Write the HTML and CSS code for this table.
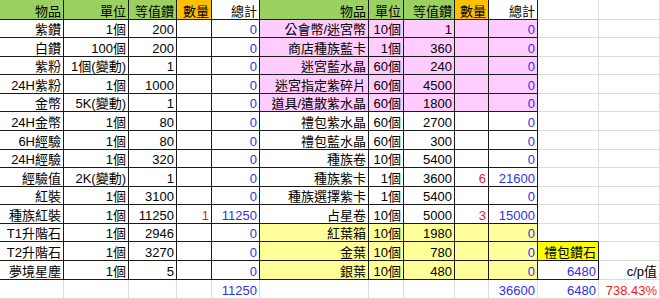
FILE: index.html
```html
<!DOCTYPE html>
<html lang="zh-Hant">
<head>
<meta charset="utf-8">
<title>等值鑽計算</title>
<link rel="stylesheet" href="styles.css">
</head>
<body>
<div class="sheet">
  <!-- row 0 -->
  <div class="c t g">物品</div><div class="c t g">單位</div><div class="c t g">等值鑽</div><div class="c t o">數量</div><div class="c t">總計</div>
  <div class="c t g">物品</div><div class="c t g">單位</div><div class="c t g">等值鑽</div><div class="c t o">數量</div><div class="c t">總計</div>
  <div class="c"></div><div class="c"></div>
  <!-- row 1 -->
  <div class="c t">紫鑽</div><div class="c t">1個</div><div class="c t">200</div><div class="c t"></div><div class="c t blue">0</div>
  <div class="c t p">公會幣/迷宮幣</div><div class="c t p">10個</div><div class="c t p">1</div><div class="c t p"></div><div class="c t p blue">0</div>
  <div class="c"></div><div class="c"></div>
  <!-- row 2 -->
  <div class="c t">白鑽</div><div class="c t">100個</div><div class="c t">200</div><div class="c t"></div><div class="c t blue">0</div>
  <div class="c t p">商店種族藍卡</div><div class="c t p">1個</div><div class="c t p">360</div><div class="c t p"></div><div class="c t p blue">0</div>
  <div class="c"></div><div class="c"></div>
  <!-- row 3 -->
  <div class="c t">紫粉</div><div class="c t">1個(變動)</div><div class="c t">1</div><div class="c t"></div><div class="c t blue">0</div>
  <div class="c t p">迷宮藍水晶</div><div class="c t p">60個</div><div class="c t p">240</div><div class="c t p"></div><div class="c t p blue">0</div>
  <div class="c"></div><div class="c"></div>
  <!-- row 4 -->
  <div class="c t">24H紫粉</div><div class="c t">1個</div><div class="c t">1000</div><div class="c t"></div><div class="c t blue">0</div>
  <div class="c t p">迷宮指定紫碎片</div><div class="c t p">60個</div><div class="c t p">4500</div><div class="c t p"></div><div class="c t p blue">0</div>
  <div class="c"></div><div class="c"></div>
  <!-- row 5 -->
  <div class="c t">金幣</div><div class="c t">5K(變動)</div><div class="c t">1</div><div class="c t"></div><div class="c t blue">0</div>
  <div class="c t p">道具/遣散紫水晶</div><div class="c t p">60個</div><div class="c t p">1800</div><div class="c t p"></div><div class="c t p blue">0</div>
  <div class="c"></div><div class="c"></div>
  <!-- row 6 -->
  <div class="c t">24H金幣</div><div class="c t">1個</div><div class="c t">80</div><div class="c t"></div><div class="c t blue">0</div>
  <div class="c t">禮包紫水晶</div><div class="c t">60個</div><div class="c t">2700</div><div class="c t"></div><div class="c t blue">0</div>
  <div class="c"></div><div class="c"></div>
  <!-- row 7 -->
  <div class="c t">6H經驗</div><div class="c t">1個</div><div class="c t">80</div><div class="c t"></div><div class="c t blue">0</div>
  <div class="c t">禮包藍水晶</div><div class="c t">60個</div><div class="c t">300</div><div class="c t"></div><div class="c t blue">0</div>
  <div class="c"></div><div class="c"></div>
  <!-- row 8 -->
  <div class="c t">24H經驗</div><div class="c t">1個</div><div class="c t">320</div><div class="c t"></div><div class="c t blue">0</div>
  <div class="c t">種族卷</div><div class="c t">10個</div><div class="c t">5400</div><div class="c t"></div><div class="c t blue">0</div>
  <div class="c"></div><div class="c"></div>
  <!-- row 9 -->
  <div class="c t">經驗值</div><div class="c t">2K(變動)</div><div class="c t">1</div><div class="c t"></div><div class="c t blue">0</div>
  <div class="c t">種族紫卡</div><div class="c t">1個</div><div class="c t">3600</div><div class="c t red">6</div><div class="c t blue">21600</div>
  <div class="c"></div><div class="c"></div>
  <!-- row 10 -->
  <div class="c t">紅裝</div><div class="c t">1個</div><div class="c t">3100</div><div class="c t"></div><div class="c t blue">0</div>
  <div class="c t">種族選擇紫卡</div><div class="c t">1個</div><div class="c t">5400</div><div class="c t"></div><div class="c t blue">0</div>
  <div class="c"></div><div class="c"></div>
  <!-- row 11 -->
  <div class="c t">種族紅裝</div><div class="c t">1個</div><div class="c t">11250</div><div class="c t red">1</div><div class="c t blue">11250</div>
  <div class="c t">占星卷</div><div class="c t">10個</div><div class="c t">5000</div><div class="c t red">3</div><div class="c t blue">15000</div>
  <div class="c"></div><div class="c"></div>
  <!-- row 12 -->
  <div class="c t">T1升階石</div><div class="c t">1個</div><div class="c t">2946</div><div class="c t"></div><div class="c t blue">0</div>
  <div class="c t y">紅葉箱</div><div class="c t y">10個</div><div class="c t y">1980</div><div class="c t y"></div><div class="c t y blue">0</div>
  <div class="c tb"></div><div class="c"></div>
  <!-- row 13 -->
  <div class="c t">T2升階石</div><div class="c t">1個</div><div class="c t">3270</div><div class="c t"></div><div class="c t blue">0</div>
  <div class="c t y">金葉</div><div class="c t y">10個</div><div class="c t y">780</div><div class="c t y"></div><div class="c t y blue">0</div>
  <div class="c t yy">禮包鑽石</div><div class="c"></div>
  <!-- row 14 -->
  <div class="c t">夢境星塵</div><div class="c t">1個</div><div class="c t">5</div><div class="c t"></div><div class="c t blue">0</div>
  <div class="c t y">銀葉</div><div class="c t y">10個</div><div class="c t y">480</div><div class="c t y"></div><div class="c t y blue">0</div>
  <div class="c t blue">6480</div><div class="c">c/p值</div>
  <!-- row 15 -->
  <div class="c"></div><div class="c"></div><div class="c"></div><div class="c"></div><div class="c blue">11250</div>
  <div class="c"></div><div class="c"></div><div class="c"></div><div class="c"></div><div class="c blue">36600</div>
  <div class="c blue">6480</div><div class="c red">738.43%</div>
</div>
</body>
</html>
```
FILE: styles.css
```css
html, body {
  margin: 0;
  padding: 0;
  background: #ffffff;
}

body {
  width: 660px;
  height: 299px;
  overflow: hidden;
  font-family: "Liberation Sans", "Noto Sans CJK TC", sans-serif;
  font-size: 13px;
  color: #000000;
}

.sheet {
  display: grid;
  grid-template-columns: 64px 65px 48px 35px 48px 109px 35px 51px 34px 49px 61px 61px;
  grid-template-rows: 20px 18px 19px 18px 19px 18px 19px 19px 18px 19px 18px 19px 18px 19px 19px 19px;
  width: 660px;
  height: 299px;
}

.c {
  box-sizing: border-box;
  display: flex;
  align-items: flex-end;
  justify-content: flex-end;
  padding-right: 2px;
  line-height: 14px;
  white-space: nowrap;
  overflow: hidden;
  border-right: 1px solid #dcdcdc;
  border-bottom: 1px solid #dcdcdc;
}

.t {
  border-right-color: #1a1a1a;
  border-bottom-color: #1a1a1a;
}

.tb {
  border-bottom-color: #1a1a1a;
}

.g { background: #9bd161; }
.o { background: #ffc000; }
.p { background: #ffccff; }
.y { background: #ffff99; }
.yy { background: #ffff00; }

.blue { color: #3030e8; }
.red { color: #ee2020; }
```
